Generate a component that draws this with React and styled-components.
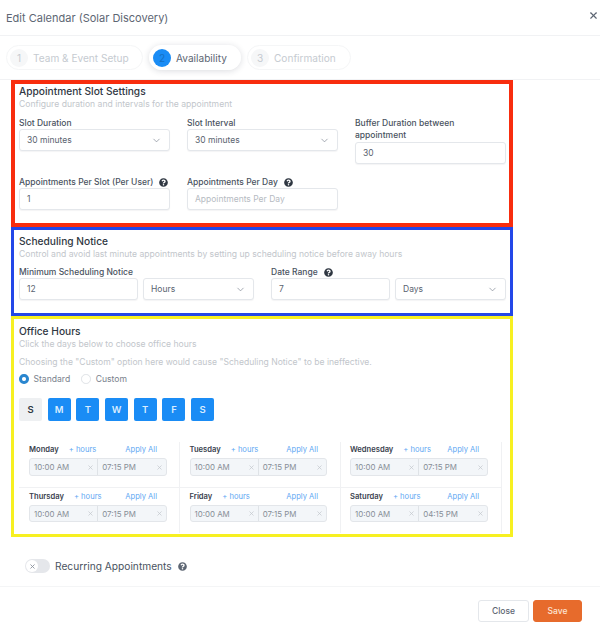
import styled, { createGlobalStyle } from "styled-components";
import { ChevronDown, X } from "lucide-react";
import { FaQuestionCircle } from "react-icons/fa";

const GlobalStyle = createGlobalStyle`
  * { box-sizing: border-box; }
  body {
    margin: 0;
    background: #fff;
    font-family: Inter, "Open Sans", "Liberation Sans", sans-serif;
  }
`;

const Modal = styled.div`
  width: 600px;
  height: 629px;
  overflow: hidden;
  background: #fff;
  display: flex;
  flex-direction: column;
`;

const Header = styled.div`
  height: 36px;
  padding: 1px 1px 0 6px;
  display: flex;
  align-items: center;
  justify-content: space-between;
  border-bottom: 1px solid #f1f2f4;
  color: #5d6673;
  font-size: 11px;
  svg { margin-top: -6px; }
`;

const Stepper = styled.div`
  height: 44px;
  padding: 9px 6px 0;
  display: flex;
  gap: 6px;
  border-bottom: 1px solid #f1f2f4;
`;

const Step = styled.div`
  height: 25px;
  width: ${(p) => p.$width}px;
  padding: 0 3px;
  display: flex;
  align-items: center;
  gap: 5px;
  border-radius: 13px;
  border: 1px solid ${(p) => (p.$active ? "#fff" : "#f5f6f7")};
  box-shadow: ${(p) => (p.$active ? "0 1px 6px rgba(30,40,60,.16)" : "none")};
  color: ${(p) => (p.$active ? "#5d6673" : "#c6cbd1")};
  font-size: 10.1px;
  white-space: nowrap;
`;

const StepNumber = styled.span`
  width: 18px;
  height: 18px;
  border-radius: 50%;
  display: flex;
  align-items: center;
  justify-content: center;
  background: ${(p) => (p.$active ? "#1a8cf5" : "#f6f7f8")};
  color: ${(p) => (p.$active ? "#1670c4" : "#c6cbd1")};
`;

const Section = styled.section`
  width: 502px;
  height: ${(p) => p.$height}px;
  margin-left: 11px;
  border: ${(p) => p.$border}px solid ${(p) => p.$color};
  padding: ${(p) => p.$top}px 4px 0 ${(p) => 8 - p.$border}px;
`;

const Title = styled.div`
  height: 14px;
  line-height: 14px;
  font-size: 10.2px;
  font-weight: 500;
  color: #2f3742;
`;

const Hint = styled.div`
  height: 12px;
  line-height: 12px;
  font-size: 8.6px;
  color: #c2c6cb;
  white-space: nowrap;
  margin-top: ${(p) => p.$top || 0}px;
`;

const SlotGrid = styled.div`
  margin-top: 7px;
  display: grid;
  grid-template-columns: repeat(3, 151px);
  column-gap: 17px;
  row-gap: 12px;
`;

const Field = styled.div`
  display: flex;
  flex-direction: column;
`;

const Label = styled.label`
  display: flex;
  align-items: center;
  gap: 6px;
  line-height: 12px;
  margin-bottom: ${(p) => (p.$stacked ? 1 : 0)}px;
  font-size: 8.5px;
  font-weight: 500;
  color: #4a5361;
  white-space: nowrap;
  svg { color: #2f3742; }
`;

const Control = styled.div`
  height: 22px;
  padding: 0 7px;
  display: flex;
  align-items: center;
  justify-content: space-between;
  background: #fff;
  border: 1px solid #e4e7eb;
  border-radius: 3px;
  box-shadow: 0 1px 1px rgba(30, 40, 60, 0.05);
  font-size: 8.5px;
  color: ${(p) => (p.$placeholder ? "#b6bbc2" : "#5a6370")};
  svg { color: #7d8591; }
`;

const NoticeGrid = styled.div`
  margin-top: 6px;
  display: grid;
  grid-template-columns: repeat(2, 235px);
  column-gap: 17px;
`;

const ControlPair = styled.div`
  display: grid;
  grid-template-columns: 119px 111px;
  column-gap: 5px;
`;

const RadioRow = styled.div`
  margin-top: 5px;
  height: 12px;
  display: flex;
  align-items: center;
  gap: 11px;
  font-size: 8.6px;
  color: #7a828d;
`;

const RadioOption = styled.span`
  display: flex;
  align-items: center;
  gap: 5px;
`;

const RadioDot = styled.span`
  width: 9.5px;
  height: 9.5px;
  border-radius: 50%;
  background: #fff;
  border: ${(p) => (p.$checked ? "3px solid #2a86cf" : "1px solid #dfe2e6")};
`;

const DayRow = styled.div`
  margin-top: 13px;
  display: flex;
  gap: 5.7px;
`;

const Day = styled.div`
  width: 23px;
  height: 23px;
  display: flex;
  align-items: center;
  justify-content: center;
  border-radius: 2px;
  font-size: 9.5px;
  font-weight: 600;
  background: ${(p) => (p.$on ? "#1a8cf5" : "#eef0f2")};
  color: ${(p) => (p.$on ? "#d8ecff" : "#2f3742")};
`;

const HoursGrid = styled.div`
  margin-top: 21px;
  width: 483px;
  display: grid;
  grid-template-columns: repeat(3, 161px);
`;

const HourCell = styled.div`
  height: ${(p) => (p.$first ? 46 : 45)}px;
  padding: ${(p) => (p.$first ? 2 : 3)}px 0 0 ${(p) => p.$pad}px;
  border-right: 1px solid #f0f1f3;
  border-bottom: ${(p) => (p.$first ? "1px solid #f0f1f3" : "none")};
`;

const HourHead = styled.div`
  height: 12px;
  padding-right: 22px;
  display: flex;
  align-items: center;
  line-height: 12px;
  font-size: 7.6px;
  color: #5fa8f3;
  white-space: nowrap;
`;

const DayName = styled.b`
  margin-right: 10px;
  font-weight: 600;
  color: #3a424e;
`;

const ApplyAll = styled.span`
  margin-left: auto;
`;

const TimeBox = styled.div`
  width: 137.5px;
  height: ${(p) => (p.$first ? 18 : 17)}px;
  margin-top: 2px;
  display: flex;
  background: #f3f6f9;
  border: 1px solid #e3e6ea;
  border-radius: 3px;
`;

const TimePart = styled.div`
  flex: 1;
  padding: 0 3px 0 4px;
  display: flex;
  align-items: center;
  justify-content: space-between;
  font-size: 7.9px;
  color: #878e97;
  & + & { border-left: 1px solid #dfe3e7; }
  svg { color: #c4c8ce; }
`;

const RecurringRow = styled.div`
  height: 50px;
  padding: 22px 0 0 25px;
  display: flex;
  align-items: flex-start;
  gap: 5px;
  border-bottom: 1px solid #f4f5f6;
  font-size: 10.2px;
  line-height: 14px;
  color: #4a5361;
  svg { margin: 3px 0 0 1px; color: #5d6673; }
`;

const Toggle = styled.span`
  width: 25px;
  height: 14px;
  padding: 1px;
  display: flex;
  background: #e5e7eb;
  border-radius: 7px;
`;

const Knob = styled.span`
  width: 12px;
  height: 12px;
  border-radius: 50%;
  background: #fff;
  display: flex;
  align-items: center;
  justify-content: center;
  svg { margin: 0; color: #8a919b; }
`;

const Footer = styled.div`
  padding: 13px 18px 0 0;
  display: flex;
  justify-content: flex-end;
  gap: 4px;
`;

const Button = styled.button`
  width: ${(p) => p.$width}px;
  height: 22px;
  padding: 0;
  border-radius: 3px;
  font-family: inherit;
  font-size: 8.5px;
  font-weight: 500;
  border: 1px solid ${(p) => (p.$primary ? "#e76b2c" : "#e4e7eb")};
  background: ${(p) => (p.$primary ? "#e76b2c" : "#fff")};
  color: ${(p) => (p.$primary ? "#fde3d3" : "#5d6673")};
`;

const Help = () => <FaQuestionCircle size={9} />;
const Chevron = () => <ChevronDown size={11} strokeWidth={1.5} />;

const days = [
  { name: "Monday", end: "07:15 PM", pad: 10 },
  { name: "Tuesday", end: "07:15 PM", pad: 9.5 },
  { name: "Wednesday", end: "07:15 PM", pad: 9 },
  { name: "Thursday", end: "07:15 PM", pad: 10, first: false },
  { name: "Friday", end: "07:15 PM", pad: 9.5, first: false },
  { name: "Saturday", end: "04:15 PM", pad: 9, first: false },
];

export default function App() {
  return (
    <>
      <GlobalStyle />
      <Modal>
        <Header>
          Edit Calendar (Solar Discovery)
          <X size={11} strokeWidth={2.5} />
        </Header>
        <Stepper>
          <Step $width={137}>
            <StepNumber>1</StepNumber>Team &amp; Event Setup
          </Step>
          <Step $width={92} $active>
            <StepNumber $active>2</StepNumber>Availability
          </Step>
          <Step $width={104}>
            <StepNumber>3</StepNumber>Confirmation
          </Step>
        </Stepper>

        <Section $height={147} $border={4} $color="#f82d0e" $top={0}>
          <Title>Appointment Slot Settings</Title>
          <Hint>Configure duration and intervals for the appointment</Hint>
          <SlotGrid>
            <Field>
              <Label>Slot Duration</Label>
              <Control>30 minutes<Chevron /></Control>
            </Field>
            <Field>
              <Label>Slot Interval</Label>
              <Control>30 minutes<Chevron /></Control>
            </Field>
            <Field>
              <Label $stacked>Buffer Duration between<br />appointment</Label>
              <Control>30</Control>
            </Field>
            <Field>
              <Label>Appointments Per Slot (Per User) <Help /></Label>
              <Control>1</Control>
            </Field>
            <Field>
              <Label>Appointments Per Day <Help /></Label>
              <Control $placeholder>Appointments Per Day</Control>
            </Field>
          </SlotGrid>
        </Section>

        <Section $height={89} $border={3} $color="#2347e8" $top={4}>
          <Title>Scheduling Notice</Title>
          <Hint>Control and avoid last minute appointments by setting up scheduling notice before away hours</Hint>
          <NoticeGrid>
            <Field>
              <Label>Minimum Scheduling Notice</Label>
              <ControlPair>
                <Control>12</Control>
                <Control>Hours<Chevron /></Control>
              </ControlPair>
            </Field>
            <Field>
              <Label>Date Range <Help /></Label>
              <ControlPair>
                <Control>7</Control>
                <Control>Days<Chevron /></Control>
              </ControlPair>
            </Field>
          </NoticeGrid>
        </Section>

        <Section $height={221} $border={3} $color="#f7f021" $top={5}>
          <Title>Office Hours</Title>
          <Hint>Click the days below to choose office hours</Hint>
          <Hint $top={6}>Choosing the "Custom" option here would cause "Scheduling Notice" to be ineffective.</Hint>
          <RadioRow>
            <RadioOption><RadioDot $checked />Standard</RadioOption>
            <RadioOption><RadioDot />Custom</RadioOption>
          </RadioRow>
          <DayRow>
            <Day>S</Day>
            <Day $on>M</Day>
            <Day $on>T</Day>
            <Day $on>W</Day>
            <Day $on>T</Day>
            <Day $on>F</Day>
            <Day $on>S</Day>
          </DayRow>
          <HoursGrid>
            {days.map((d) => (
              <HourCell key={d.name} $pad={d.pad} $first={d.first !== false}>
                <HourHead>
                  <DayName>{d.name}</DayName>+ hours<ApplyAll>Apply All</ApplyAll>
                </HourHead>
                <TimeBox $first={d.first !== false}>
                  <TimePart>10:00 AM<X size={7} strokeWidth={2.5} /></TimePart>
                  <TimePart>{d.end}<X size={7} strokeWidth={2.5} /></TimePart>
                </TimeBox>
              </HourCell>
            ))}
          </HoursGrid>
        </Section>

        <RecurringRow>
          <Toggle><Knob><X size={7} strokeWidth={3} /></Knob></Toggle>
          Recurring Appointments
          <FaQuestionCircle size={9} />
        </RecurringRow>
        <Footer>
          <Button $width={51}>Close</Button>
          <Button $width={49} $primary>Save</Button>
        </Footer>
      </Modal>
    </>
  );
}
